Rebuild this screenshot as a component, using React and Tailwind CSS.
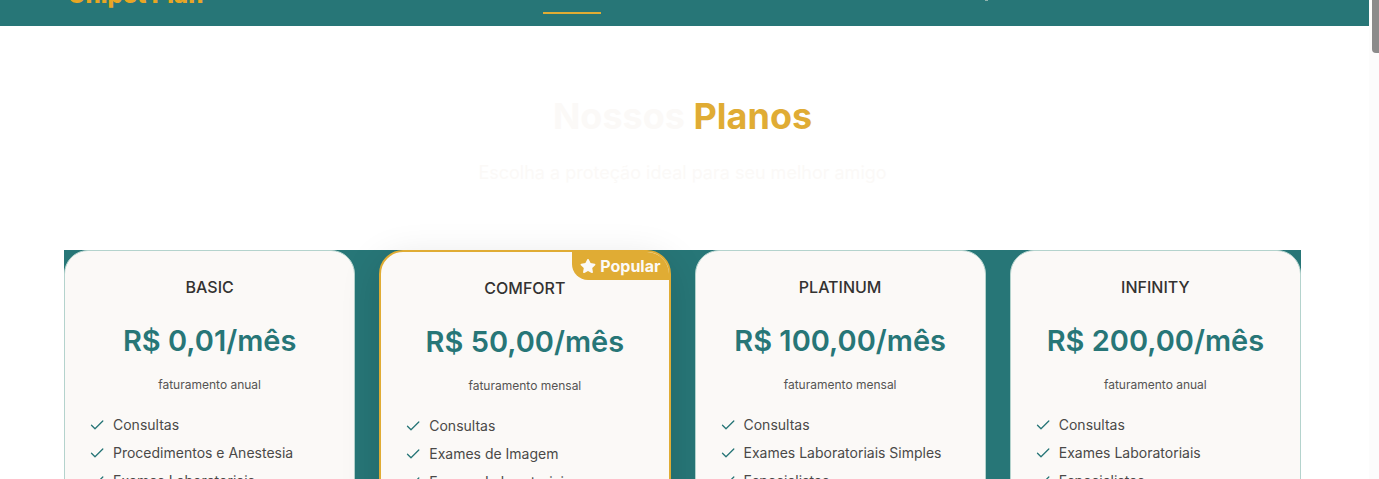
import { FaStar } from "react-icons/fa";

const plans = [
  { name: "BASIC", price: "R$ 0,01/mês", billing: "faturamento anual", items: ["Consultas", "Procedimentos e Anestesia", "Exames Laboratoriais"] },
  { name: "COMFORT", price: "R$ 50,00/mês", billing: "faturamento mensal", popular: true, items: ["Consultas", "Exames de Imagem", "Exames Laboratoriais"] },
  { name: "PLATINUM", price: "R$ 100,00/mês", billing: "faturamento mensal", items: ["Consultas", "Exames Laboratoriais Simples", "Especialistas"] },
  { name: "INFINITY", price: "R$ 200,00/mês", billing: "faturamento anual", items: ["Consultas", "Exames Laboratoriais", "Especialistas"] },
];

function Check() {
  return (
    <svg className="size-4 shrink-0 text-[#277677]" viewBox="0 0 16 16" fill="none" stroke="currentColor" strokeWidth="1.3" strokeLinecap="round" strokeLinejoin="round" aria-hidden="true">
      <path d="M2.5 8.2 6 11.8 13.8 4" />
    </svg>
  );
}

function PlanCard({ plan }) {
  const frame = plan.popular
    ? "border-2 border-[#e0ac34] shadow-[0_10px_40px_rgba(0,0,0,0.12)]"
    : "border border-[#b4d3cd]";
  return (
    <article className={`relative overflow-hidden rounded-3xl bg-[#fbf9f7] px-6 pt-6 pb-8 ${frame}`}>
      {plan.popular && (
        <span className="absolute top-0 right-0 flex items-center gap-1 rounded-bl-2xl bg-[#e0ac34] py-0.5 pr-2 pl-2 text-base font-bold text-[#fbf9f7]">
          <FaStar className="size-4" aria-hidden="true" />
          Popular
        </span>
      )}
      <h2 className="text-center text-base font-medium text-[#333231]">{plan.name}</h2>
      <p className="mt-6 text-center text-[29px] leading-9 font-semibold text-[#277677]">{plan.price}</p>
      <p className="mt-[18px] text-center text-xs text-[#555453]">{plan.billing}</p>
      <ul className="mt-[22px] flex flex-col gap-2 text-sm text-[#4a4948]">
        {plan.items.map((item) => (
          <li key={item} className="flex items-center gap-2">
            <Check />
            {item}
          </li>
        ))}
      </ul>
    </article>
  );
}

export default function App() {
  return (
    <div className="flex h-screen overflow-hidden bg-white font-['Inter',sans-serif]">
      <div className="min-w-0 flex-1">
        <header className="grid h-[26px] grid-cols-[475px_58px_1fr] items-start overflow-hidden bg-[#277677] px-[68px]">
          <a href="#inicio" className="-mt-[21px] text-2xl leading-8 font-extrabold text-[#e8a624]">Unipet Plan</a>
          <a href="#planos" aria-label="Planos" className="h-3.5 border-b-2 border-[#e0ac34]" />
          <span className="ml-[384px] h-px w-[3px] bg-[#8fb3ae]" aria-hidden="true" />
        </header>
        <main className="pr-1">
          <section className="px-16 pt-[68px]">
            <h1 className="text-center text-4xl leading-[44px] font-bold text-[#fbf9f7]">
              Nossos <span className="text-[#e0ac34]">Planos</span>
            </h1>
            <p className="mt-5 text-center text-lg leading-[30px] text-[#fbf9f7]">Escolha a proteção ideal para seu melhor amigo</p>
            <div className="mt-[62px] grid grid-cols-4 gap-6 bg-[#277677]">
              {plans.map((plan) => (
                <PlanCard key={plan.name} plan={plan} />
              ))}
            </div>
          </section>
        </main>
      </div>
      <div className="w-2.5 bg-[#fcfcfc] pl-[3px]" aria-hidden="true">
        <div className="h-[53px] rounded-bl bg-[#8b8b8b]" />
      </div>
    </div>
  );
}
